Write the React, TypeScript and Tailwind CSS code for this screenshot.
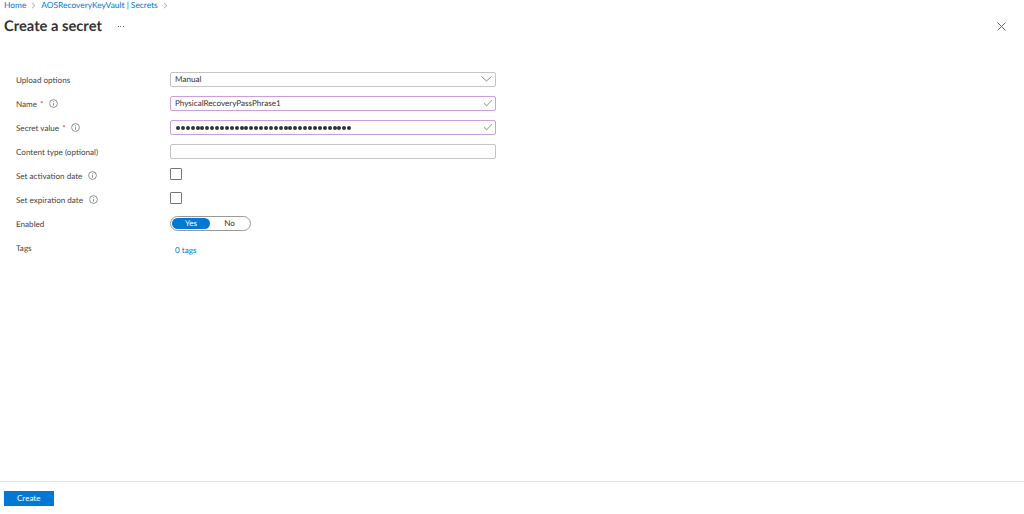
const font = "font-['Lato',sans-serif] [text-rendering:geometricPrecision]";

function Info() {
  return (
    <svg width="9" height="9" viewBox="0 0 9 9" className="ml-[5.5px] shrink-0 text-[#777]" fill="none" stroke="currentColor" strokeWidth="0.8">
      <circle cx="4.5" cy="4.5" r="3.9" />
      <path d="M4.5 4v2.7M4.5 2.2v1" />
    </svg>
  );
}

function Check() {
  return (
    <svg width="10" height="8" viewBox="0 0 10 8" fill="none" stroke="#8cc26a" strokeWidth="1.1" className="absolute right-[2px] top-[2px]">
      <path d="M1 4.2L3.6 6.8 9 1" />
    </svg>
  );
}

function Row({ label, required, info, children }: { label: string; required?: boolean; info?: boolean; children: React.ReactNode }) {
  return (
    <div className="flex h-6 items-center">
      <div className="flex w-[154px] items-center text-[8.1px] text-[#444]">
        <span>{label}</span>
        {required && <span className="ml-[3px] text-[#a4262c]">*</span>}
        {info && <Info />}
      </div>
      {children}
    </div>
  );
}

export default function App() {
  return (
    <div className={`${font} flex h-[514px] w-[1024px] flex-col bg-white text-[#333]`}>
      <div className="flex h-[11px] items-center pl-1 text-[8.4px] text-[#0078d4]">
        <span>Home</span>
        <svg width="5" height="7" viewBox="0 0 5 7" fill="none" stroke="#888" strokeWidth="0.7" className="mx-[5px]"><path d="M1 .8L4 3.5 1 6.2" /></svg>
        <span>AOSRecoveryKeyVault | Secrets</span>
        <svg width="5" height="7" viewBox="0 0 5 7" fill="none" stroke="#888" strokeWidth="0.7" className="ml-[5px]"><path d="M1 .8L4 3.5 1 6.2" /></svg>
      </div>
      <div className="flex h-[30px] items-center pl-1 pr-[18px]">
        <h1 className="text-[14.7px] font-bold leading-none text-[#333]">Create a secret</h1>
        <span className="ml-[16px] flex gap-[1.5px]">
          <span className="h-px w-px bg-[#666]" />
          <span className="h-px w-px bg-[#666]" />
          <span className="h-px w-px bg-[#666]" />
        </span>
        <svg width="9" height="9" viewBox="0 0 9 9" fill="none" stroke="#666" strokeWidth="1" className="ml-auto"><path d="M.5.5l8 8M8.5.5l-8 8" /></svg>
      </div>
      <div className="flex flex-1 flex-col pl-4 pt-[27px]">
        <Row label="Upload options">
          <div className="relative mb-px flex h-[15px] w-[326px] items-center rounded-[2px] border-[1.5px] border-[#c4c4c4] pl-1 text-[8.1px]">
            Manual
            <svg width="11" height="6" viewBox="0 0 11 6" fill="none" stroke="#777" strokeWidth="0.9" className="absolute right-[3px] top-[3px]"><path d="M.5.5l5 4.5 5-4.5" /></svg>
          </div>
        </Row>
        <Row label="Name" required info>
          <div className="relative mb-px flex h-[15px] w-[326px] items-center rounded-[2px] border-[1.5px] border-[#cc9fdb] pl-1 text-[8.1px]">
            PhysicalRecoveryPassPhrase1
            <Check />
          </div>
        </Row>
        <Row label="Secret value" required info>
          <div className="relative mb-px flex h-[15px] w-[326px] items-center rounded-[2px] border-[1.5px] border-[#cc9fdb] pl-[5px] text-[8.1px]">
            <span className="flex gap-[0.9px]">
              {Array.from({ length: 36 }).map((_, i) => (
                <span key={i} className="h-1 w-1 rounded-full bg-[#333]" />
              ))}
            </span>
            <Check />
          </div>
        </Row>
        <Row label="Content type (optional)">
          <div className="mb-px h-[15px] w-[326px] rounded-[2px] border-[1.5px] border-[#c4c4c4]" />
        </Row>
        <Row label="Set activation date" info>
          <div className="mb-1 h-[12px] w-[12px] rounded-[1px] border border-[#777]" />
        </Row>
        <Row label="Set expiration date" info>
          <div className="mb-1 h-[12px] w-[12px] rounded-[1px] border border-[#777]" />
        </Row>
        <Row label="Enabled">
          <div className="mb-px flex h-[15px] w-[81px] items-center rounded-full border border-[#999] px-px text-[8.1px]">
            <span className="flex h-[11px] w-[38px] items-center justify-center rounded-full bg-[#0078d4] text-white">Yes</span>
            <span className="flex-1 text-center">No</span>
          </div>
        </Row>
        <Row label="Tags">
          <span className="mt-1 pl-[5px] text-[8.1px] text-[#0078d4]">0 tags</span>
        </Row>
      </div>
      <div className="flex h-[33px] items-start border-t border-[#e5e5e5] pl-1 pt-[9px]">
        <button className="flex h-[15px] w-[49.5px] items-center justify-center bg-[#0078d4] text-[8.1px] text-white">Create</button>
      </div>
    </div>
  );
}
